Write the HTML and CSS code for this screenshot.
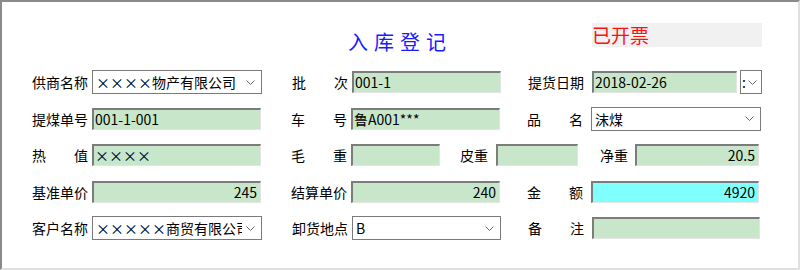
FILE: index.html
```html
<!DOCTYPE html>
<html lang="zh-CN">
<head>
    <meta charset="UTF-8">
    <title>入库登记</title>
    <link rel="stylesheet" href="styles.css">
</head>
<body>
    <div class="frame">
        <!-- Header -->
        <div class="header">
            <h1 class="title">入库登记</h1>
            <div class="status">已开票</div>
        </div>

        <div class="rows">
            <div class="row">
                <label class="lbl">供商名称</label>
                <div class="select w170"><span class="val"><span class="x">××××</span>物产有限公司</span><svg class="chev" width="9" height="5" viewBox="0 0 9 5"><path d="M0.5 0.5 L4.5 4.5 L8.5 0.5" fill="none" stroke="#666" stroke-width="1"/></svg></div>
                <label class="lbl spread col2"><span>批</span><span>次</span></label>
                <div class="field w149">001-1</div>
                <label class="lbl col3">提货日期</label>
                <div class="field w145">2018-02-26</div>
                <div class="picker">:<svg class="chev" width="9" height="5" viewBox="0 0 9 5"><path d="M0.5 0.5 L4.5 4.5 L8.5 0.5" fill="none" stroke="#666" stroke-width="1"/></svg></div>
            </div>

            <div class="row">
                <label class="lbl">提煤单号</label>
                <div class="field w169">001-1-001</div>
                <label class="lbl spread col2"><span>车</span><span>号</span></label>
                <div class="field w149">鲁A001***</div>
                <label class="lbl spread col3"><span>品</span><span>名</span></label>
                <div class="select w170"><span class="val">沫煤</span><svg class="chev" width="9" height="5" viewBox="0 0 9 5"><path d="M0.5 0.5 L4.5 4.5 L8.5 0.5" fill="none" stroke="#666" stroke-width="1"/></svg></div>
            </div>

            <div class="row">
                <label class="lbl spread"><span>热</span><span>值</span></label>
                <div class="field w169"><span class="x">××××</span></div>
                <label class="lbl spread col2"><span>毛</span><span>重</span></label>
                <div class="field w89"></div>
                <label class="lbl short tare">皮重</label>
                <div class="field w82"></div>
                <label class="lbl short net">净重</label>
                <div class="field w124 num">20.5</div>
            </div>

            <div class="row">
                <label class="lbl">基准单价</label>
                <div class="field w169 num">245</div>
                <label class="lbl col2">结算单价</label>
                <div class="field w149 num">240</div>
                <label class="lbl spread col3"><span>金</span><span>额</span></label>
                <div class="field w168 num total">4920</div>
            </div>

            <div class="row">
                <label class="lbl">客户名称</label>
                <div class="select w170"><span class="val"><span class="x">×××××</span>商贸有限公司</span><svg class="chev" width="9" height="5" viewBox="0 0 9 5"><path d="M0.5 0.5 L4.5 4.5 L8.5 0.5" fill="none" stroke="#666" stroke-width="1"/></svg></div>
                <label class="lbl col2">卸货地点</label>
                <div class="select w149"><span class="val">B</span><svg class="chev" width="9" height="5" viewBox="0 0 9 5"><path d="M0.5 0.5 L4.5 4.5 L8.5 0.5" fill="none" stroke="#666" stroke-width="1"/></svg></div>
                <label class="lbl spread col3"><span>备</span><span>注</span></label>
                <div class="field w168"></div>
            </div>
        </div>
    </div>
</body>
</html>
```

FILE: styles.css
```css
:root {
    --field-green: #c8e7ca;
    --field-cyan: #80ffff;
    --edge-dark: #7c7c7c;
    --edge-light: #e4e4e4;
}

* {
    margin: 0;
    padding: 0;
    box-sizing: border-box;
}

body {
    font-family: "Noto Sans CJK SC", "Noto Sans", sans-serif;
    font-size: 14px;
    color: #000;
    background: #fff;
}

.frame {
    width: 800px;
    height: 270px;
    border-top: 2px solid #8a8a8a;
    border-left: 2px solid #8a8a8a;
    border-right: 2px solid #e0e0e0;
    border-bottom: 2px solid #e0e0e0;
    padding: 0 34px 0 30px;
}

/* header: title centred, status box on the right */
.header {
    display: grid;
    height: 66px;
}

.title {
    grid-area: 1 / 1;
    justify-self: center;
    align-self: start;
    margin-top: 26px;
    padding-left: 4px;
    font-size: 20px;
    font-weight: normal;
    line-height: 28px;
    letter-spacing: 6px;
    color: #1a1aff;
}

.status {
    grid-area: 1 / 1;
    justify-self: end;
    align-self: start;
    margin-top: 21px;
    margin-right: 2px;
    width: 170px;
    height: 24px;
    background: #f1f1f1;
    color: #ff1010;
    font-size: 19px;
    line-height: 24px;
}

.rows {
    display: flex;
    flex-direction: column;
    gap: 12.5px;
    padding-top: 2px;
}

.row {
    display: flex;
    align-items: center;
    height: 24px;
}

.lbl {
    width: 56px;
    margin-right: 4px;
    line-height: 20px;
    white-space: nowrap;
}

.lbl.spread {
    display: flex;
    justify-content: space-between;
}

.lbl.col2 { margin-left: 30px; }
.lbl.col3 { margin-left: 27px; margin-right: 8px; }

.lbl.short { width: 28px; }
.lbl.tare { margin-left: 20px; margin-right: 8px; }
.lbl.net { margin-left: 22px; margin-right: 7px; }

.field {
    height: 22px;
    background: var(--field-green);
    border-top: 2px solid var(--edge-dark);
    border-left: 2px solid var(--edge-dark);
    border-right: 1px solid var(--edge-light);
    border-bottom: 1px solid var(--edge-light);
    padding: 0 3px 0 1px;
    line-height: 19px;
    white-space: nowrap;
    overflow: hidden;
}

.field.num { text-align: right; }
.field.total { background: var(--field-cyan); }

.select {
    display: flex;
    align-items: center;
    height: 24px;
    background: #fff;
    border: 1px solid #7a7a7a;
    padding: 0 6px 0 3px;
    white-space: nowrap;
    overflow: hidden;
}

.select .val {
    flex: 1;
    overflow: hidden;
    line-height: 22px;
}

.chev {
    flex: none;
    margin-left: 4px;
}

.picker {
    display: flex;
    align-items: center;
    width: 22px;
    height: 24px;
    margin-left: 3px;
    border: 1px solid #7a7a7a;
    background: #fff;
    padding-left: 1px;
    line-height: 20px;
}

.picker .chev { margin-left: 2px; }

.x { font-variant-east-asian: full-width; }

.w82 { width: 82px; }
.w89 { width: 89px; }
.w124 { width: 124px; }
.w145 { width: 145px; }
.w149 { width: 149px; }
.w168 { width: 168px; }
.w169 { width: 169px; }
.w170 { width: 170px; }
```
